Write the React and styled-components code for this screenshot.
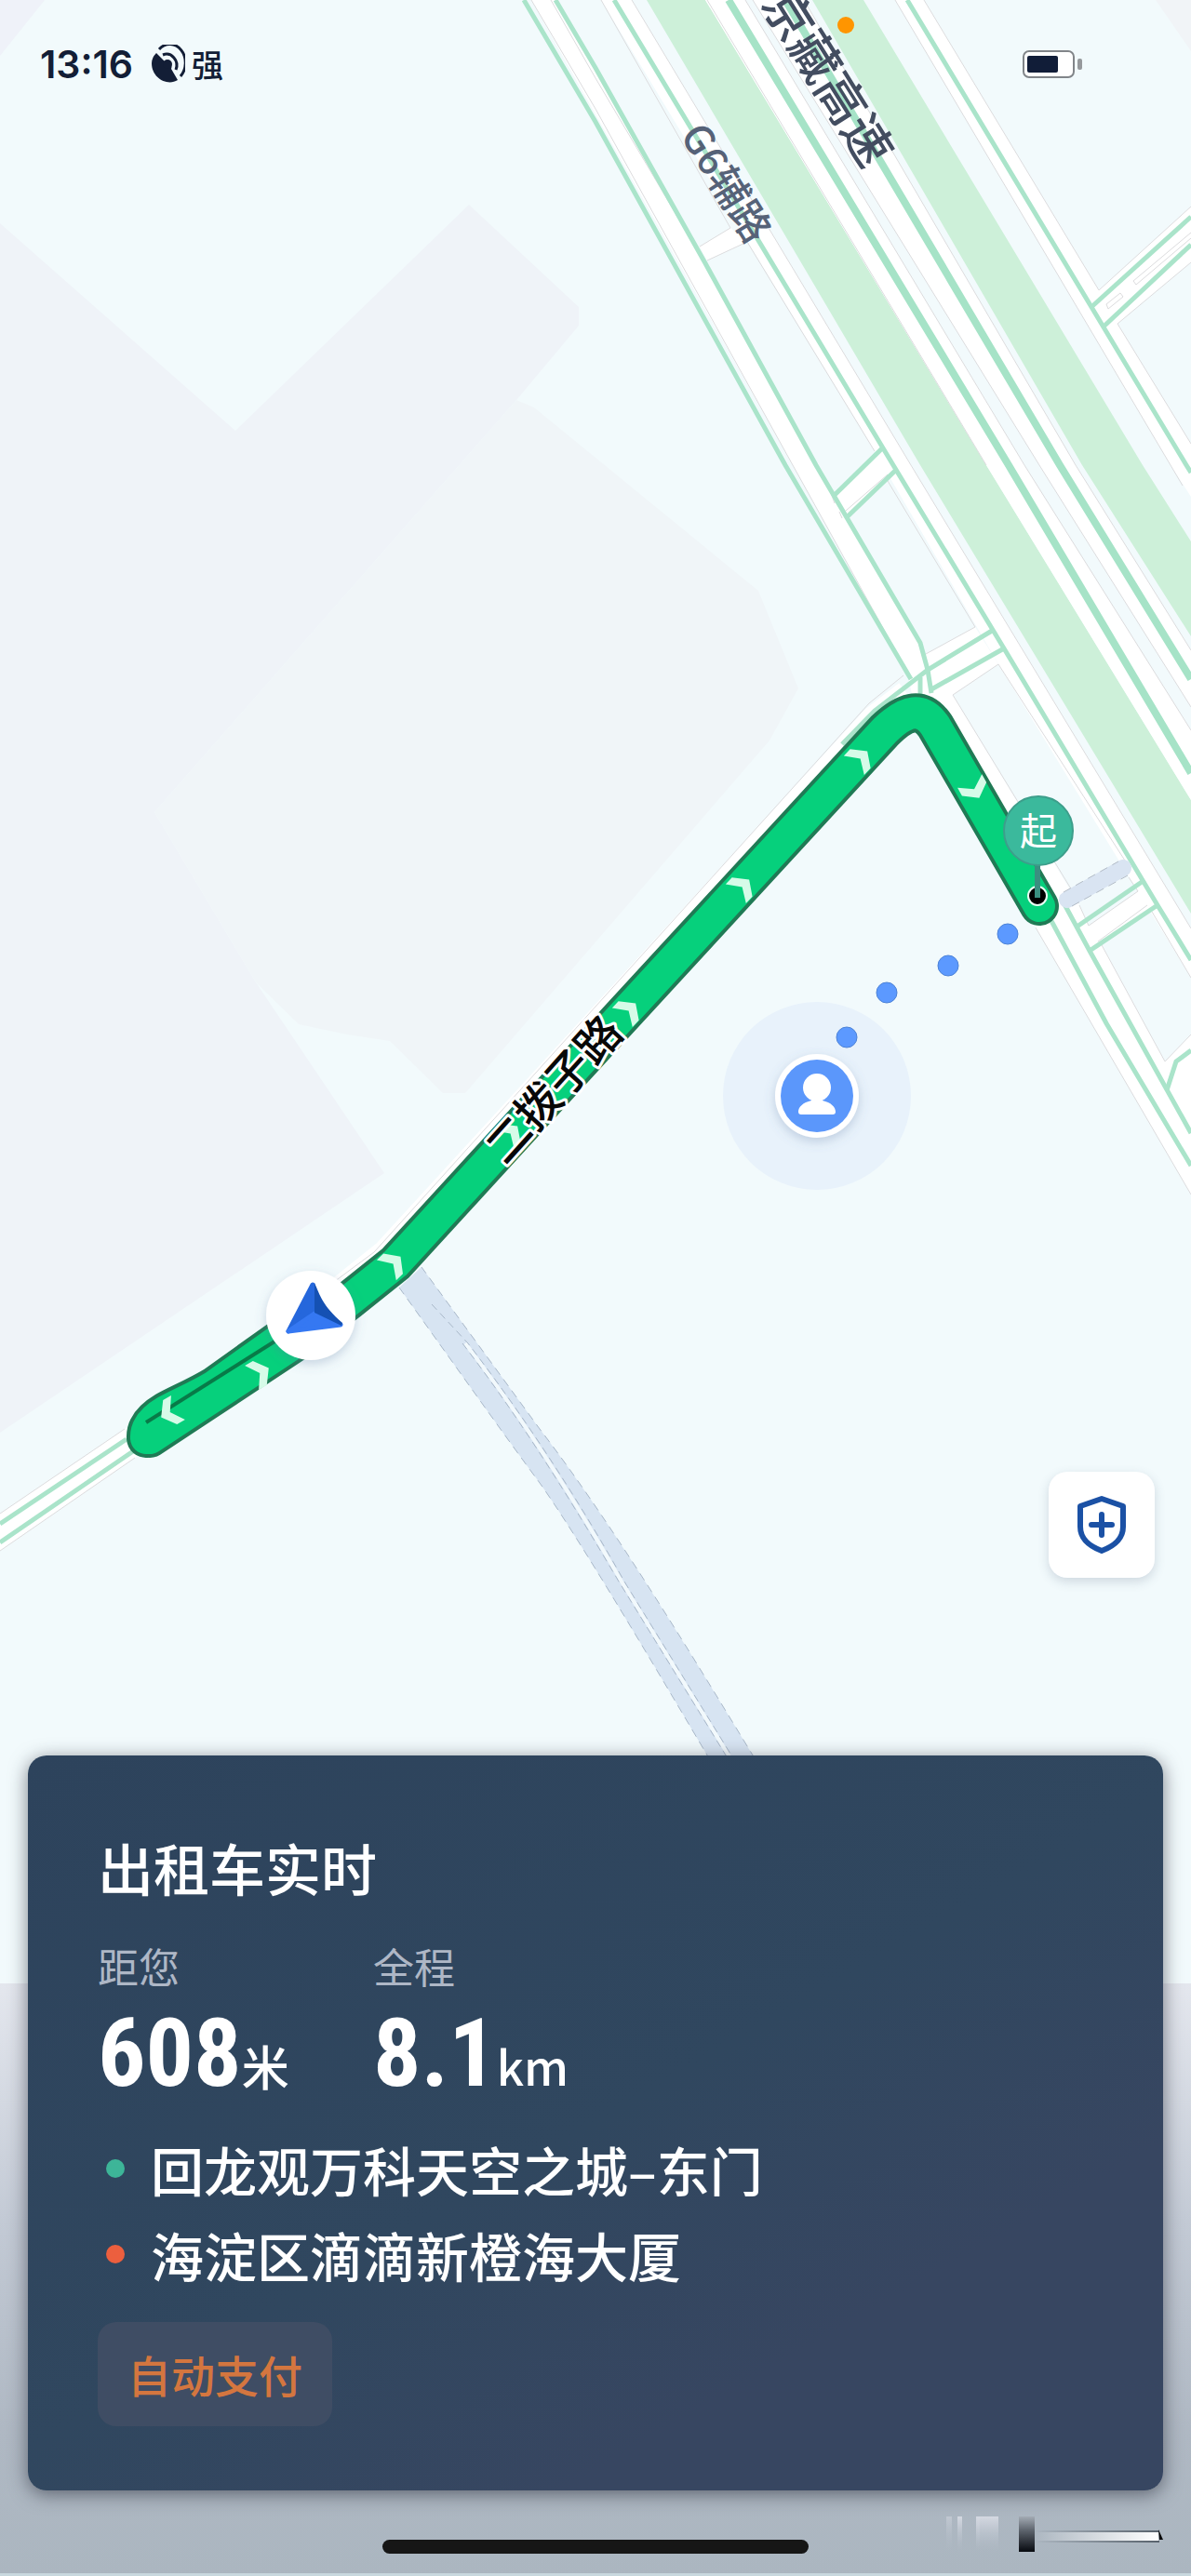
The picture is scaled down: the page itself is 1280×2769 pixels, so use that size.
import React from 'react'
import styled, { createGlobalStyle } from 'styled-components'

const surfaces = [
  { points: '0,0 48,0 0,60', fill: '#eff2f9' },
  { points: '1242,0 1280,0 1280,55', fill: '#f1f4f7' },
  { points: '0,240 253,463 504,220 622,330 622,350 555,430 166,873 275,1056 413,1261 0,1540', fill: '#eff3f8' },
  { points: '555,430 574,438 815,635 858,740 827,796 500,1175 476,1175 419,1119 373,1112 321,1101 275,1056 166,873', fill: '#f0f5f8' },
]

const belts = [
  '695,0 758,0 1060,500 1280,860 1280,982 989,500',
  '873,0 928,0 1228,500 1280,582 1280,684 1163,500',
]

const asphalt = [
  '571,0 597,0 877,500 989,691 1001,741 990,760 975,722 852,500',
  '646,0 679,0 979,500 1280,998 1280,1051 1073,714 940,485',
  '758,0 801,0 1101,500 1280,785 1280,860 1060,500',
  '809,0 864,0 1156,500 1280,699 1280,760 1117,500',
  '962,0 993,0 1181,312 1280,222 1280,282 1201,348 1280,477 1280,534 1258,500',
  '752,265 785,245 803,260 760,280',
  '897,532 948,482 962,506 909,557',
  '995,703 1048,674 1073,714 1024,747 1160,973 1170,995 1223,958 1213,943 1238,980 1183,1014 1252,1141 1280,1112 1280,1284 1113,997 985,770 975,722',
  '0,1627 134,1536 300,1430 320,1450 145,1567 0,1667',
]

const curbs = [
  '571,0 640,117 852,500 975,722',
  '592,0 640,84 750,270',
  '646,0 785,245', '803,260 940,485',
  '679,0 979,500 1280,998',
  '760,0 1060,500', '801,0 1101,500 1280,785',
  '809,0 1117,500 1280,760', '864,0 1156,500 1280,699',
  '962,0 1258,500 1271,522',
  '993,0 1181,312 1280,222',
  '1280,477 1201,348 1280,282',
  '1191,332 1189,327 1204,315 1207,319 1191,332',
  '1280,250 1218,302 1221,306 1280,256',
  '752,265 785,245', '760,280 803,260',
  '893,530 897,541', '902,550 905,557', '954,517 1048,674 995,703',
  '954,510 909,549',
  '1209,925 1073,714 1024,747 1152,957',
  '1160,973 1170,995 1223,958 1213,943',
  '1180,1012 1233,973', '1238,980 1280,1051',
  '1183,1014 1252,1141 1280,1112',
  '1113,997 1280,1284',
  '971,726 934,756 640,1082 402,1346 340,1392',
  '0,1627 134,1536', '0,1667 145,1567',
]

const lanes = [
  '563,0 640,131 844,500 979,730',
  '597,0 640,73 758,283 877,500 989,691 997,720 1001,745',
  '660,0 960,500 1079,697 1244,973 1280,1032',
  '975,0 1173,330 1275,500 1280,508',
  '1280,233 1173,330', '1280,263 1185,352',
  '948,482 897,532', '962,506 909,557',
  '1066,678 997,720 940,764 905,800', '1079,697 1001,741',
  '989,728 989,750',
  '1130,990 1189,1100 1280,1253', '1144,972 1171,1022 1280,1218',
  '1230,946 1156,997', '1244,973 1171,1022',
  '1254,1172 1264,1141 1280,1129',
  '0,1638 136,1547', '0,1658 143,1560',
]

const chevrons = [
  [926, 814, -47], [799, 952, -47], [677, 1085, -47], [550, 1217, -47],
  [424, 1357, -44], [281, 1475, -30], [181, 1519, 150], [1048, 850, 61],
]

const walkDots = [[1083, 1004], [1019, 1038], [953, 1067], [910, 1115]]

const routeMain = 'M1117 974 L1005 780 C991 760 975 762 951 785 L663 1098 L425 1358 L375 1398 L317 1443 L161 1546'
const routeBack = 'M317 1428 L230 1490 C210 1502 190 1510 178 1517 Q156 1530 157 1546'

function RouteMap() {
  return (
    <MapCanvas viewBox='0 0 1280 2132' role='img' aria-label='路线地图'>
      <defs>
        <filter id='softShadow' x='-50%' y='-50%' width='200%' height='200%'>
          <feDropShadow dx='0' dy='4' stdDeviation='6' floodColor='#5a78a0' floodOpacity='0.3' />
        </filter>
      </defs>

      {surfaces.map((s) => <polygon key={s.points} points={s.points} fill={s.fill} />)}
      {belts.map((p) => <polygon key={p} points={p} fill='#cdf0d9' />)}
      {asphalt.map((p) => <polygon key={p} points={p} fill='#fff' />)}
      <path d='M979 751 L945 777 L657 1092 L419 1352 L369 1392' fill='none' stroke='#fff' strokeWidth='42' />
      {curbs.map((p) => <polyline key={p} points={p} fill='none' stroke='#dcdcde' strokeWidth='1' />)}
      {lanes.map((p) => <polyline key={p} points={p} fill='none' stroke='#aae4ca' strokeWidth='5' />)}
      <polyline points='783,0 1084,500 1280,831' fill='none' stroke='#a6e3c7' strokeWidth='8' />
      <polyline points='844,0 1139,500 1280,730' fill='none' stroke='#a6e3c7' strokeWidth='8' />

      {/* footpaths */}
      <path d='M1147 967 L1207 933' stroke='#d9e4f2' strokeWidth='18' strokeLinecap='round' />
      <path d='M1143 959 L1202 926 M1152 974 L1212 941' stroke='#b4bdc8' strokeWidth='1' strokeDasharray='9 6' />
      <path
        d='M429 1384 C480 1455 540 1540 580 1594 C620 1650 700 1785 762 1890 L811 1890 C750 1790 660 1640 580 1536 L453 1362 Z'
        fill='#d7e4f2'
      />
      <path
        d='M429 1384 C480 1455 540 1540 580 1594 C620 1650 700 1785 762 1890 M811 1890 C750 1790 660 1640 580 1536 L453 1362'
        fill='none' stroke='#a9b8c9' strokeWidth='1' strokeDasharray='9 6'
      />
      <path d='M500 1444 C566 1530 622 1620 668 1700 L785 1890' fill='none' stroke='#f2f9fc' strokeWidth='4' />
      <path
        d='M464 1402 L503 1444 C569 1530 625 1618 671 1700 L788 1890 M497 1444 C563 1530 619 1622 665 1700 L782 1890'
        fill='none' stroke='#a9b8c9' strokeWidth='1' strokeDasharray='8 5'
      />

      <g fill='none' strokeLinecap='round' strokeLinejoin='round'>
        <path d={routeBack} stroke='#207a55' strokeWidth='42' />
        <path d={routeMain} stroke='#207a55' strokeWidth='42' />
        <path d={routeBack} stroke='#06d07c' strokeWidth='34' />
        <path d={routeMain} stroke='#06d07c' strokeWidth='34' />
      </g>
      <path d='M157 1529 L295 1442' stroke='#087a48' strokeWidth='4' />
      {chevrons.map(([x, y, angle]) => (
        <polygon
          key={`${x}-${y}`}
          points='-12,-15 -2,-15 9,0 -2,15 -12,15 -2,0'
          fill='#d6fbe8'
          transform={`translate(${x} ${y}) rotate(${angle})`}
        />
      ))}

      <RoadName $size={53} $color='#434d60' transform='translate(889 84) rotate(58)' dy='18'>京藏高速</RoadName>
      <RoadName $size={43} $color='#566278' transform='translate(780 197) rotate(58)' dy='15'>G6辅路</RoadName>
      <RoadName $size={48} $color='#080808' $halo transform='translate(595 1171) rotate(-48)' dy='17'>二拨子路</RoadName>

      {/* passenger */}
      <circle cx='878' cy='1178' r='101' fill='#e8f2fb' />
      {walkDots.map(([x, y]) => (
        <circle key={x} cx={x} cy={y} r='11' fill='#5c99ff' stroke='#4c82d6' strokeWidth='1' />
      ))}
      <circle cx='878' cy='1178' r='45' fill='#fff' filter='url(#softShadow)' />
      <circle cx='878' cy='1178' r='39' fill='#5b97fb' />
      <circle cx='878' cy='1169' r='15' fill='#fff' />
      <path d='M872 1180 h12 v3 c9 2 14 7 14 12 q0 3 -3 3 h-34 q-3 0 -3 -3 c0 -5 5 -10 14 -12 Z' fill='#fff' />

      {/* taxi heading */}
      <circle cx='334' cy='1414' r='48' fill='#fff' filter='url(#softShadow)' />
      <g strokeLinejoin='round' strokeWidth='5'>
        <path d='M336 1381 L310 1431 L338 1411 Z' fill='#2567dc' stroke='#2567dc' />
        <path d='M310 1431 L338 1412 L366 1424 Z' fill='#3578f2' stroke='#3578f2' />
      </g>
      <path d='M338 1379 C344 1392 346 1403 368 1422 L367 1425 L338 1411 Z' fill='#1551b3' />

      {/* pick-up pin */}
      <circle cx='1115' cy='963' r='10' fill='#000' stroke='#e8fff4' strokeWidth='2' />
      <path d='M1115 930 V965' stroke='#3a8f80' strokeWidth='6' />
      <circle cx='1116' cy='893' r='37' fill='#3bb99c' stroke='#3d9e8b' strokeWidth='2' />
      <PinText x='1116' y='893' dy='15'>起</PinText>

      <circle cx='909' cy='27' r='9' fill='#ff9500' />
    </MapCanvas>
  )
}

function Stat({ label, value, unit }) {
  return (
    <div>
      <StatLabel>{label}</StatLabel>
      <StatValue>
        {value}<small>{unit}</small>
      </StatValue>
    </div>
  )
}

function App() {
  return (
    <>
      <GlobalStyle />
      <Screen>
        <RouteMap />
        <Content>
          <StatusBar>
            <time>13:16</time>
            <svg width='36' height='42' viewBox='0 0 36 42' fill='none' stroke='#131e36' strokeWidth='3'>
              <path d='M5 9 L14 18 A6 6 0 0 1 21 26 L28 38 C17 45 0 36 0 20 Q0 14 5 9 Z' fill='#131e36' stroke='none' />
              <circle cx='17' cy='21' r='5' fill='#131e36' stroke='none' />
              <path d='M8 5 A16 19 0 0 1 31 34' />
              <path d='M12 11 A11 12 0 0 1 26 27' />
            </svg>
            <span>强</span>
            <Battery width='64' height='30' viewBox='0 0 64 30'>
              <rect x='1' y='1' width='54' height='28' rx='6' fill='#fff' stroke='#818589' strokeWidth='2' />
              <rect x='5' y='6' width='33' height='18' rx='2' fill='#111d38' />
              <rect x='59' y='9' width='5' height='12' rx='2' fill='#96999c' />
            </Battery>
          </StatusBar>

          <MapTools>
            <SafetyButton type='button' aria-label='安全中心'>
              <svg width='56' height='64' viewBox='0 0 56 64' fill='none' stroke='#1b51a5' strokeWidth='6' strokeLinejoin='round'>
                <path d='M28 4 L51 12 V34 C51 48 41 55 28 60 C15 55 5 48 5 34 V12 Z' />
                <path d='M28 21 V43 M17 32 H39' strokeLinecap='round' />
              </svg>
            </SafetyButton>
          </MapTools>

          <TripCard>
            <h1>出租车实时</h1>
            <Stats>
              <Stat label='距您' value='608' unit='米' />
              <Stat label='全程' value='8.1' unit='km' />
            </Stats>
            <Places>
              <Place $dot='#3db598'>回龙观万科天空之城–东门</Place>
              <Place $dot='#ec5f3e'>海淀区滴滴新橙海大厦</Place>
            </Places>
            <PayTag>自动支付</PayTag>
          </TripCard>

          <Footer>
            <i />
            <HomeBar />
            <Smear viewBox='0 0 236 40' width='236' height='40' aria-hidden='true'>
              <defs>
                <linearGradient id='fadeLight' x1='0' y1='0' x2='0' y2='1'>
                  <stop offset='0' stopColor='#d5d9e2' />
                  <stop offset='1' stopColor='#b2bcc7' stopOpacity='0' />
                </linearGradient>
                <linearGradient id='fadeDark' x1='0' y1='0' x2='0' y2='1'>
                  <stop offset='0' stopColor='#a3abb4' />
                  <stop offset='0.4' stopColor='#5c636c' />
                  <stop offset='1' stopColor='#070a10' />
                </linearGradient>
                <linearGradient id='streak' x1='0' y1='0' x2='1' y2='0'>
                  <stop offset='0' stopColor='#fff' stopOpacity='0' />
                  <stop offset='1' stopColor='#fff' />
                </linearGradient>
                <linearGradient id='streakEdge' x1='0' y1='0' x2='1' y2='0'>
                  <stop offset='0' stopColor='#58626c' stopOpacity='0' />
                  <stop offset='1' stopColor='#58626c' />
                </linearGradient>
              </defs>
              <rect x='2' width='6' height='38' fill='url(#fadeLight)' opacity='0.5' />
              <rect x='14' width='5' height='38' fill='url(#fadeLight)' />
              <rect x='34' width='24' height='38' fill='url(#fadeLight)' />
              <rect x='34' width='4' height='34' fill='url(#fadeLight)' />
              <rect x='80' width='17' height='38' fill='url(#fadeDark)' />
              <rect x='97' y='15' width='134' height='2' fill='url(#streakEdge)' />
              <rect x='97' y='17' width='133' height='9' fill='url(#streak)' />
              <rect x='97' y='26' width='134' height='2' fill='url(#streakEdge)' />
              <path d='M230 14 L235 25 L231 25 Z' fill='#0a0a0a' />
            </Smear>
          </Footer>
        </Content>
      </Screen>
    </>
  )
}

export default App

const GlobalStyle = createGlobalStyle`
  *{
    box-sizing:border-box;
  }
  body{
    margin:0;
    font-family:'Noto Sans CJK SC', 'Noto Sans', sans-serif;
  }
`

const Screen = styled.main`
display:grid;
grid-template-columns:minmax(0, 1fr);
min-height:100vh;
background:
  linear-gradient(#c8d8de, #c8d8de) bottom / 100% 3px no-repeat,
  linear-gradient(#e4e7ee, #c3cad5 40%, #afb8c3 75%, #abb6c0) bottom / 100% 637px no-repeat,
  #f2fafc;
`

const MapCanvas = styled.svg`
grid-area:1 / 1;
width:100%;
height:auto;
align-self:start;
`

const RoadName = styled.text`
font-size:${(p) => p.$size}px;
font-weight:500;
fill:${(p) => p.$color};
text-anchor:middle;
stroke:${(p) => (p.$halo ? '#fff' : 'none')};
stroke-width:6px;
stroke-linejoin:round;
paint-order:stroke;
`

const PinText = styled.text`
font-size:40px;
fill:#fff;
text-anchor:middle;
`

const Content = styled.div`
grid-area:1 / 1;
display:flex;
flex-direction:column;
`

const StatusBar = styled.header`
display:flex;
align-items:center;
padding:44px 117px 0 43px;
font-size:34px;
line-height:50px;
font-weight:500;
color:#131e36;
time{
  margin-right:20px;
  font-family:Inter, sans-serif;
  font-size:41px;
  font-weight:600;
}
span{
  margin-left:7px;
}
`

const Battery = styled.svg`
margin-left:auto;
`

const MapTools = styled.div`
flex:1;
display:flex;
justify-content:flex-end;
align-items:flex-end;
padding:0 39px 191px;
`

const SafetyButton = styled.button`
display:flex;
justify-content:center;
align-items:center;
width:114px;
height:114px;
padding:0;
border:0;
border-radius:20px;
background:#fff;
box-shadow:0 4px 12px rgba(60, 80, 110, 0.2);
cursor:pointer;
`

const TripCard = styled.section`
margin:0 30px;
padding:80px 75px 69px;
border-radius:20px;
background:linear-gradient(150deg, #2d435c, #30475f 50%, #374661 75%);
box-shadow:0 4px 20px rgba(40, 44, 56, 0.6);
color:#fff;
h1{
  margin:0 0 36px;
  font-size:60px;
  line-height:80px;
  font-weight:500;
}
`

const Stats = styled.div`
display:flex;
margin-bottom:20px;
> div{
  min-width:296px;
}
`

const StatLabel = styled.div`
font-size:44px;
line-height:60px;
color:#aeb7c6;
`

const StatValue = styled.div`
font-family:'Roboto Condensed', Roboto, sans-serif;
font-size:102px;
line-height:128px;
font-weight:700;
white-space:nowrap;
small{
  font-family:'Noto Sans CJK SC', sans-serif;
  font-size:51px;
  line-height:60px;
  font-weight:500;
}
`

const Places = styled.ul`
display:grid;
gap:12px;
margin:0 0 33px;
padding:0;
list-style:none;
`

const Place = styled.li`
display:flex;
align-items:center;
font-size:57px;
line-height:80px;
font-weight:500;
&::before{
  content:'';
  width:20px;
  height:20px;
  margin:0 28px 0 9px;
  border-radius:50%;
  background:${(p) => p.$dot};
}
`

const PayTag = styled.span`
display:block;
width:fit-content;
padding:0 32px;
border-radius:20px;
background:#3f4d64;
font-size:47px;
line-height:112px;
font-weight:500;
color:#d4763f;
`

const Footer = styled.footer`
display:grid;
grid-template-columns:1fr 458px 1fr;
align-items:end;
padding:28px 29px 24px;
`

const HomeBar = styled.div`
height:15px;
border-radius:8px;
background:#161616;
`

const Smear = styled.svg`
justify-self:end;
`
